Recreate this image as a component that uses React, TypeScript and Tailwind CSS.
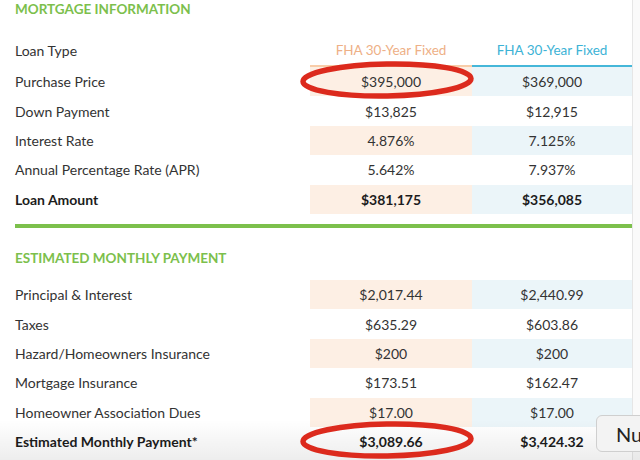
import React from "react";

type Row = { label: string; a: string; b: string; shaded: boolean; bold?: boolean };

const info: Row[] = [
  { label: "Purchase Price", a: "$395,000", b: "$369,000", shaded: true },
  { label: "Down Payment", a: "$13,825", b: "$12,915", shaded: false },
  { label: "Interest Rate", a: "4.876%", b: "7.125%", shaded: true },
  { label: "Annual Percentage Rate (APR)", a: "5.642%", b: "7.937%", shaded: false },
  { label: "Loan Amount", a: "$381,175", b: "$356,085", shaded: true, bold: true },
];

const monthly: Row[] = [
  { label: "Principal & Interest", a: "$2,017.44", b: "$2,440.99", shaded: true },
  { label: "Taxes", a: "$635.29", b: "$603.86", shaded: false },
  { label: "Hazard/Homeowners Insurance", a: "$200", b: "$200", shaded: true },
  { label: "Mortgage Insurance", a: "$173.51", b: "$162.47", shaded: false },
  { label: "Homeowner Association Dues", a: "$17.00", b: "$17.00", shaded: true },
  { label: "Estimated Monthly Payment*", a: "$3,089.66", b: "$3,424.32", shaded: false, bold: true },
];

function DataRow({ r }: { r: Row }) {
  const weight = r.bold ? "font-bold text-[#1c1c1c]" : "text-[#333333]";
  return (
    <div className="flex h-[29.4px] items-center">
      <div className={`w-[295px] ${weight}`}>{r.label}</div>
      <div
        className={`flex h-full w-[162px] items-center justify-center ${weight} ${
          r.shaded ? "bg-[#fdefe4]" : ""
        }`}
      >
        {r.a}
      </div>
      <div
        className={`flex h-full w-[160px] items-center justify-center ${weight} ${
          r.shaded ? "bg-[#ebf5f9]" : ""
        }`}
      >
        {r.b}
      </div>
    </div>
  );
}

export default function App() {
  return (
    <div
      className="relative flex h-[460px] w-[640px] overflow-hidden bg-white text-[14px]"
      style={{ fontFamily: "Lato, 'Open Sans', sans-serif" }}
    >
      <div className="w-[632px] pl-[15px]">
        <div className="pt-[1px] text-[13.5px] font-bold uppercase leading-[16px] text-[#7cbf4c]">
          Mortgage Information
        </div>
        <div className="mt-[19px] flex h-[29px] items-center">
          <div className="w-[295px] text-[#333333]">Loan Type</div>
          <div className="flex h-full w-[162px] items-center justify-center text-[13.5px] text-[#eeb086]">
            FHA 30-Year Fixed
          </div>
          <div className="flex h-full w-[160px] items-center justify-center text-[13.5px] text-[#3db3d6]">
            FHA 30-Year Fixed
          </div>
        </div>
        <div className="flex h-[2px]">
          <div className="w-[295px]" />
          <div className="w-[162px] bg-[#f8cda9]" />
          <div className="w-[160px] bg-[#45b7d9]" />
        </div>
        {info.map((r) => (
          <DataRow key={r.label} r={r} />
        ))}
        <div className="mt-[10px] h-[4px] bg-[#7cc04c]" />
        <div className="mt-[22px] text-[13.5px] font-bold uppercase leading-[16px] text-[#7cbf4c]">
          Estimated Monthly Payment
        </div>
        <div className="mt-[14px]">
          {monthly.map((r) => (
            <DataRow key={r.label} r={r} />
          ))}
        </div>
      </div>
      <div className="w-[8px] border-l border-[#e6e6e6] bg-[#fafafa]" />

      <div className="pointer-events-none absolute bottom-0 left-0 h-[40px] w-full bg-gradient-to-b from-transparent to-[rgba(0,0,0,0.07)]" />

      <svg className="pointer-events-none absolute left-0 top-0" width="640" height="460">
        <ellipse cx="387" cy="80" rx="84" ry="16" fill="none" stroke="#dc2a1d" strokeWidth="5.5" transform="rotate(-1 387 80)" />
        <ellipse cx="387" cy="440" rx="84" ry="16" fill="none" stroke="#dc2a1d" strokeWidth="5.5" transform="rotate(-1 387 440)" />
      </svg>

      <div className="absolute left-[596px] top-[415px] flex h-[37px] w-[60px] items-center rounded-[6px] border border-[#cfcfcf] bg-[#f3f3f3] pl-[19px] text-[20px] text-[#222]">
        Nu
      </div>
    </div>
  );
}
